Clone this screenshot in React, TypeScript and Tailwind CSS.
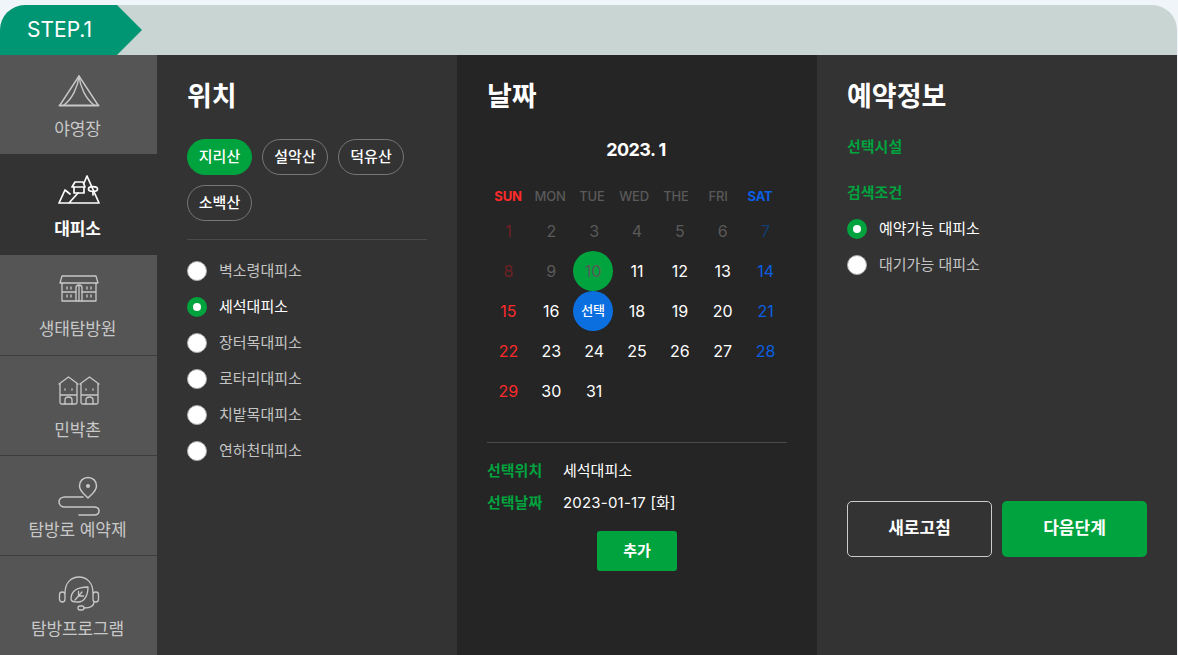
import React from "react";

const FONT = "font-['Inter','Noto_Sans_CJK_KR',sans-serif]";

const Tent = () => (
  <svg width="42" height="34" viewBox="0 0 42 34" fill="none" stroke="currentColor" strokeWidth="1.4" strokeLinejoin="round" strokeLinecap="round">
    <path d="M21 1 L2 30 M21 1 L40 30" />
    <path d="M21 1 C20 12 14 24 6 30 M21 1 C22 12 28 24 36 30" />
    <path d="M1.5 30.5 H40.5" strokeWidth="2" />
  </svg>
);

const Shelter = () => (
  <svg width="42" height="34" viewBox="0 0 42 34" fill="none" stroke="currentColor" strokeWidth="1.7" strokeLinejoin="round" strokeLinecap="round">
    <path d="M1 29 H41 L29 2 L26 9 M1 29 L7 16 L12 20 M11 29 L20 19" />
    <path d="M16 13 V19 H26 V13 M14 13 L17 8 H25 L27 13 Z" />
    <ellipse cx="35" cy="15" rx="4.5" ry="2.4" />
    <path d="M35 17.5 V21" />
  </svg>
);

const Eco = () => (
  <svg width="40" height="28" viewBox="0 0 40 28" fill="none" stroke="currentColor" strokeWidth="1.3" strokeLinejoin="round" strokeLinecap="round">
    <path d="M3 1 H37 L39 8 H1 Z" />
    <path d="M3 8 V26 H37 V8 M3 17 H17 M23 17 H37" />
    <path d="M17 26 V13 C17 9 23 9 23 13 V26 M20 10 V26" />
    <path d="M8 12 V14 M12 12 V14 M28 12 V14 M32 12 V14 M8 20 V22 M12 20 V22 M28 20 V22 M32 20 V22" />
  </svg>
);

const Minbak = () => (
  <svg width="42" height="30" viewBox="0 0 42 30" fill="none" stroke="currentColor" strokeWidth="1.3" strokeLinejoin="round" strokeLinecap="round">
    <path d="M1 8 L10.5 1 L20 8 M2 8 V26.5 Q2 28 3.5 28 H17.5 Q19 28 19 26.5 V8 M2 19 H19" />
    <path d="M22 8 L31.5 1 L41 8 M23 8 V26.5 Q23 28 24.5 28 H38.5 Q40 28 40 26.5 V8 M23 19 H40" />
    <path d="M7 28 V24 C7 20 14 20 14 24 V28 M28 28 V24 C28 20 35 20 35 24 V28" />
    <path d="M7 13 V14 M14 13 V14 M28 13 V14 M35 13 V14" />
  </svg>
);

const Trail = () => (
  <svg width="42" height="42" viewBox="0 0 42 42" fill="none" stroke="currentColor" strokeWidth="1.5" strokeLinecap="round" strokeLinejoin="round">
    <path d="M30 22 C26 18 21.500 15 21.500 10 C21.500 5 25 1.500 30 1.500 C35 1.500 38.500 5 38.500 10 C38.500 15 34 18 30 22 Z" />
    <circle cx="30" cy="10" r="2" fill="currentColor" stroke="none" />
    <path d="M25 21 H7 C3.500 21 1 23 1 26 C1 29 3.500 31 7 31 H36 C39 31 41 32.500 41 35 C41 37.500 39 39 36 39 H21" />
  </svg>
);

const Headset = () => (
  <svg width="42" height="36" viewBox="0 0 42 36" fill="none" stroke="currentColor" strokeWidth="1.3" strokeLinecap="round" strokeLinejoin="round">
    <path d="M7 17 C7 6 14 1 21 1 C28 1 35 6 35 17" />
    <rect x="1.500" y="16" width="5.500" height="10" rx="2.700" />
    <rect x="35" y="16" width="5.500" height="10" rx="2.700" />
    <path d="M36 26 C36 30 32 32 26 32" />
    <rect x="20" y="30" width="6" height="4" rx="2" />
    <path d="M13 23 C13 16 18 11 30 11 C30 20 26 26 20 26 C16 26 13 26 13 23 Z" />
    <path d="M17 24 L24 16 M20.500 20 V15.500 M20.500 20 H25.500" />
  </svg>
);

const menus = [
  { label: "야영장", icon: <Tent />, active: false, h: "h-[99px]", iconH: "h-[34px]", mt: "mt-[20px]", gap: "mt-[8px]" },
  { label: "대피소", icon: <Shelter />, active: true, h: "h-[101px]", iconH: "h-[34px]", mt: "mt-[20px]", gap: "mt-[9px]" },
  { label: "생태탐방원", icon: <Eco />, active: false, h: "h-[100px]", iconH: "h-[28px]", mt: "mt-[20px]", gap: "mt-[14px]" },
  { label: "민박촌", icon: <Minbak />, active: false, h: "h-[100px]", iconH: "h-[30px]", mt: "mt-[20px]", gap: "mt-[12px]" },
  { label: "탐방로 예약제", icon: <Trail />, active: false, h: "h-[100px]", iconH: "h-[42px]", mt: "mt-[20px]", gap: "mt-0" },
  { label: "탐방프로그램", icon: <Headset />, active: false, h: "h-[100px]", iconH: "h-[36px]", mt: "mt-[20px]", gap: "mt-[5px]" },
];

const Radio = ({ label, checked }: { label: string; checked?: boolean }) => (
  <div className="flex items-center h-[36px]">
    {checked ? (
      <span className="w-5 h-5 rounded-full bg-[#00a33e] flex items-center justify-center">
        <span className="w-2 h-2 rounded-full bg-white" />
      </span>
    ) : (
      <span className="w-5 h-5 rounded-full bg-white border border-[#aaaaaa]" />
    )}
    <span className={`ml-3 text-[15px] ${checked ? "text-white" : "text-[#c4c4c4]"}`}>{label}</span>
  </div>
);

const Chip = ({ label, on, wide }: { label: string; on?: boolean; wide?: boolean }) => (
  <button
    className={`h-[36px] ${wide ? "w-[66px]" : "w-[65px]"} rounded-full text-[15px] font-medium text-white border ${
      on ? "bg-[#00a33e] border-[#00a33e]" : "border-[#777777]"
    }`}
  >
    {label}
  </button>
);

// 1월 달력
const weeks = [
  [1, 2, 3, 4, 5, 6, 7],
  [8, 9, 10, 11, 12, 13, 14],
  [15, 16, 17, 18, 19, 20, 21],
  [22, 23, 24, 25, 26, 27, 28],
  [29, 30, 31],
];

const dayColor = (d: number, col: number) => {
  if (d < 8) {
    if (col === 0) return "text-[#6e2023]";
    if (col === 6) return "text-[#123d70]";
    return "text-[#5a5a5a]";
  }
  if (d === 8) return "text-[#6e2023]";
  if (d === 9) return "text-[#5a5a5a]";
  if (col === 0) return "text-[#ff2a2a]";
  if (col === 6) return "text-[#0c5fe0]";
  return "text-white";
};

const heads = ["SUN", "MON", "TUE", "WED", "THE", "FRI", "SAT"];

export default function App() {
  return (
    <div className={`${FONT} w-[1178px] h-[655px] overflow-hidden bg-[#f0f5f9] pt-[5px] pr-px`}>
      <div className="h-[50px] bg-[#c9d5d2] rounded-t-[25px] overflow-hidden flex">
        <div className="relative w-[117px] h-full bg-[#009673] flex items-center pl-[27px] text-[21px] text-white">
          STEP.1
          <span className="absolute left-[117px] top-0 w-0 h-0 border-y-[25px] border-y-transparent border-l-[25px] border-l-[#009673]" />
        </div>
      </div>
      <div className="flex h-[600px] bg-[#333333]">
        <div className="w-[157px] shrink-0 flex flex-col">
          {menus.map((m, i) => (
            <div
              key={m.label}
              className={`${m.h} flex flex-col items-center ${
                m.active ? "bg-[#333333] text-white" : "bg-[#555555] text-[#c8c8c8]"
              } ${i > 2 ? "border-t border-[#3c3c3c]" : ""}`}
            >
              <div className={`${m.mt} ${m.iconH} flex items-center`}>{m.icon}</div>
              <div className={`${m.gap} pr-[2px] text-[17px] leading-[24px] tracking-[-0.1px] whitespace-nowrap ${m.active ? "font-bold" : ""}`}>{m.label}</div>
            </div>
          ))}
        </div>

        <div className="w-[300px] shrink-0 px-[30px] pt-[23px]">
          <h2 className="text-[27px] leading-[38px] font-bold text-white">위치</h2>
          <div className="flex flex-wrap gap-x-[10px] gap-y-[10px] mt-[23px]">
            <Chip label="지리산" on />
            <Chip label="설악산" wide />
            <Chip label="덕유산" wide />
            <Chip label="소백산" />
          </div>
          <div className="h-px bg-[#4a4a4a] mt-[18px] mb-[13px] w-[240px]" />
          <Radio label="벽소령대피소" />
          <Radio label="세석대피소" checked />
          <Radio label="장터목대피소" />
          <Radio label="로타리대피소" />
          <Radio label="치밭목대피소" />
          <Radio label="연하천대피소" />
        </div>

        <div className="w-[360px] shrink-0 bg-[#252525] px-[30px] pt-[23px]">
          <h2 className="text-[27px] leading-[38px] font-bold text-white">날짜</h2>
          <div className="text-center pr-[2px] text-[18px] leading-[28px] font-bold tracking-[-0.6px] text-white mt-[20px]">2023. 1</div>
          <div className="grid grid-cols-7 w-[294px] mt-[22px] text-[13px] leading-[20px] font-medium tracking-[-0.2px] text-center text-[#5a5a5a]">
            {heads.map((h) => (
              <div key={h} className={h === "SUN" ? "text-[#ff2a2a] font-bold" : h === "SAT" ? "text-[#0c5fe0] font-bold" : ""}>
                {h}
              </div>
            ))}
          </div>
          <div className="mt-[5px] w-[300px]">
            {weeks.map((w, r) => (
              <div key={r} className="grid grid-cols-7 h-[40px]">
                {w.map((d, c) => (
                  <div key={d} className="flex items-center justify-center">
                    {d === 10 ? (
                      <span className="w-10 h-10 mr-[2px] shrink-0 rounded-full bg-[#00a33e] flex items-center justify-center text-[16px] text-[#5a5a5a]">10</span>
                    ) : d === 17 ? (
                      <span className="w-10 h-10 mr-[2px] shrink-0 rounded-full bg-[#0b6fe0] flex items-center justify-center text-[13px] font-medium text-white">선택</span>
                    ) : (
                      <span className={`text-[16px] ${dayColor(d, c)}`}>{d}</span>
                    )}
                  </div>
                ))}
              </div>
            ))}
          </div>
          <div className="h-px bg-[#4a4a4a] mt-[31px]" />
          <div className="flex items-center mt-[12px] h-[32px] text-[15px]">
            <span className="w-[76px] font-bold text-[#00a33e]">선택위치</span>
            <span className="text-white">세석대피소</span>
          </div>
          <div className="flex items-center h-[32px] text-[15px]">
            <span className="w-[76px] font-bold text-[#00a33e]">선택날짜</span>
            <span className="text-white tracking-[0.2px]">2023-01-17 [화]</span>
          </div>
          <div className="flex justify-center mt-[12px]">
            <button className="w-[80px] h-[40px] rounded-[3px] bg-[#00a33e] text-white text-[15px] font-bold">추가</button>
          </div>
        </div>

        <div className="w-[360px] shrink-0 px-[30px] pt-[23px] flex flex-col">
          <h2 className="text-[27px] leading-[38px] font-bold text-white">예약정보</h2>
          <div className="mt-[19px] text-[15px] leading-[24px] font-bold text-[#00a33e]">선택시설</div>
          <div className="mt-[22px] text-[15px] leading-[24px] font-bold text-[#00a33e]">검색조건</div>
          <div className="mt-[6px]">
            <Radio label="예약가능 대피소" checked />
            <Radio label="대기가능 대피소" />
          </div>
          <div className="flex gap-[10px] mt-[218px]">
            <button className="w-[145px] h-[56px] rounded-[5px] border border-[#cccccc] text-white text-[17px] font-bold">새로고침</button>
            <button className="w-[145px] h-[56px] rounded-[5px] bg-[#00a33e] text-white text-[17px] font-bold">다음단계</button>
          </div>
        </div>
      </div>
    </div>
  );
}
